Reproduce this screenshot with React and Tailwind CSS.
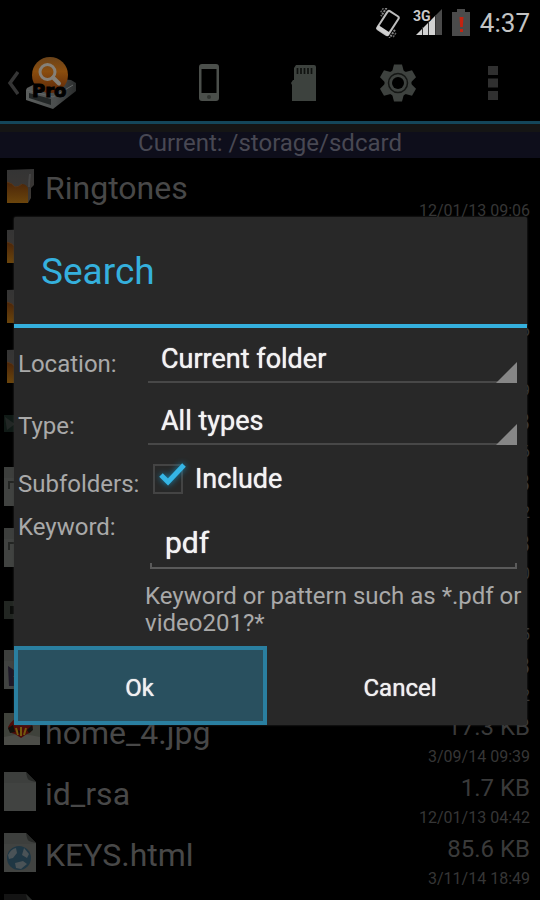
import React, { useState } from 'react';

const FILES = [
  { name: 'Ringtones', icon: 'folder', date: '12/01/13 09:06' },
  { icon: 'folder' },
  { icon: 'folder', date: '6' },
  { icon: 'folder', date: '9' },
  { icon: 'video', size: 'B', date: '6' },
  { icon: 'doc', size: 'B', date: '2' },
  { icon: 'doc', size: 'B', date: '0' },
  { icon: 'apk', date: '5' },
  { icon: 'picture', size: 'B', date: '2' },
  { name: 'home_4.jpg', icon: 'photo', size: '17.3 KB', date: '3/09/14 09:39' },
  { name: 'id_rsa', icon: 'page', size: '1.7 KB', date: '12/01/13 04:42' },
  { name: 'KEYS.html', icon: 'html', size: '85.6 KB', date: '3/11/14 18:49' },
  { icon: 'blank' }
];

function StatusBar() {
  return (
    <div className="flex h-[45px] shrink-0 items-center justify-end pr-[10px]">
      {/* Vibrate */}
      <svg width="26" height="30" viewBox="0 0 26 30" className="mr-3" fill="none">
        <g transform="rotate(33 13 15)">
          <rect x="6.5" y="4" width="13" height="22" rx="2" stroke="#bdbdbd" strokeWidth="2" />
          <path d="M6 24h14" stroke="#d0d0d0" strokeWidth="4" />
          <path d="M3.5 3v10M22.5 17v10" stroke="#858585" strokeWidth="2" strokeDasharray="2 1" />
          <path d="M1 5v6M25 19v6" stroke="#666" strokeWidth="1.5" strokeDasharray="2 1" />
        </g>
      </svg>
      {/* Signal */}
      <svg width="30" height="29" viewBox="0 0 30 29" className="mr-[9px]">
        <path d="M29 1v26h-6V7z" fill="#4a4a4a" />
        <path d="M22 8v19H3z" fill="#d2d2d2" />
        <path d="M9.5 19v8M15.5 13v14M22.5 7v20" stroke="#333" strokeWidth="1" />
        <text x="0" y="13" fontSize="14" fontWeight="700" fill="#c9c9c9" stroke="#000" strokeWidth="2" paintOrder="stroke" fontFamily="Roboto, sans-serif">3G</text>
      </svg>
      {/* Battery */}
      <svg width="18" height="27" viewBox="0 0 18 27" className="mr-[10px]">
        <path d="M0 3h5V0h8v3h5v24H0z" fill="#4b4b4b" />
        <path d="M7.500 8h4l-.7 10H8.200zM8 20h3v3H8z" fill="#c42310" />
      </svg>
      <span className="text-[26px] leading-8 text-[#c4c4c4]">4:37</span>
    </div>
  );
}

function AppLogo() {
  return (
    <svg width="52" height="54" viewBox="0 0 52 54">
      <defs>
        <linearGradient id="orb" x1="0" y1="0" x2="0" y2="1">
          <stop offset="0" stopColor="#6a431a" />
          <stop offset=".4" stopColor="#8a4d0e" />
          <stop offset="1" stopColor="#5c2608" />
        </linearGradient>
        <linearGradient id="drive" x1="0" y1="0" x2="1" y2="0">
          <stop offset="0" stopColor="#5b5e5d" />
          <stop offset=".6" stopColor="#4a4d4d" />
          <stop offset="1" stopColor="#2a2c2c" />
        </linearGradient>
      </defs>
      <path d="M2 32l20-10 24 2 5 3v8L28 53 1 44V34z" fill="url(#drive)" />
      <path d="M4 37l22 6v6L4 42z" fill="#222626" />
      <path d="M2 34l26 7 20-12" stroke="#626565" fill="none" />
      <circle cx="25" cy="19" r="18" fill="url(#orb)" />
      <circle cx="22.500" cy="16" r="7.500" fill="none" stroke="#858078" strokeWidth="3" />
      <path d="M28 21.500l6 6" stroke="#858078" strokeWidth="4" strokeLinecap="round" />
      <text x="7" y="41" fontSize="18" fontWeight="700" fill="#000" stroke="#000" fontFamily="DejaVu Sans, sans-serif">Pro</text>
    </svg>
  );
}

function ActionBar() {
  return (
    <header className="flex h-[79px] shrink-0 items-stretch border-b-[3px] border-[#14465a]">
      <button type="button" aria-label="Back" className="flex w-[162px] items-center gap-[6px] pl-[7px]">
        <svg width="12" height="24" viewBox="0 0 12 24" fill="none" stroke="#353535" strokeWidth="3.500">
          <path d="M11 1L3 12l8 11" />
        </svg>
        <AppLogo />
      </button>
      <button type="button" aria-label="Phone storage" className="flex flex-1 items-center justify-center">
        <svg width="22" height="38" viewBox="0 0 22 38">
          <path fillRule="evenodd" d="M4 0h14q3 0 3 3v31q0 3-3 3H4q-3 0-3-3V3q0-3 3-3zM3.500 5v24h15V5z" fill="#4b4f4b" />
          <circle cx="11" cy="33" r="2" fill="#303330" />
        </svg>
      </button>
      <button type="button" aria-label="SD card" className="flex flex-1 items-center justify-center">
        <svg width="26" height="36" viewBox="0 0 26 36">
          <path d="M5 0h18q2 0 2 2v34H1V20l-1-2 2-3h1V3z" fill="#3d423e" />
          <path d="M6.500 3v6M10 3v6M13.500 3v6M17 3v6M20.500 3v6" stroke="#101210" strokeWidth="1.700" />
        </svg>
      </button>
      <button type="button" aria-label="Settings" className="flex flex-1 items-center justify-center">
        <svg width="38" height="38" viewBox="-19 -19 38 38">
          <g fill="#3e423f">
            <circle r="13.500" />
            {[0, 60, 120, 180, 240, 300].map(angle => (
              <path key={angle} d="M-6-11l2-7.500h8l2 7.500z" transform={`rotate(${angle})`} />
            ))}
          </g>
          <circle r="9.500" fill="none" stroke="#141614" strokeWidth="1.500" />
          <circle r="6" fill="#000" />
        </svg>
      </button>
      <button type="button" aria-label="More options" className="flex flex-1 items-center justify-center">
        <svg width="10" height="34" viewBox="0 0 10 34" fill="#303030">
          <path d="M0 0h10v9H0zM0 12.500h10v9H0zM0 25h10v9H0z" />
        </svg>
      </button>
    </header>
  );
}

function FileIcon({ type }) {
  if (type === 'folder') {
    return (
      <svg width="32" height="40" viewBox="0 0 32 40">
        <defs>
          <linearGradient id="folder" x1="0" y1="0" x2="0" y2="1">
            <stop offset="0" stopColor="#4a2509" />
            <stop offset="1" stopColor="#6b450c" />
          </linearGradient>
          <linearGradient id="paper" x1="0" y1="0" x2="0" y2="1">
            <stop offset="0" stopColor="#343434" />
            <stop offset="1" stopColor="#3d3834" />
          </linearGradient>
        </defs>
        <path d="M3 5l27-1v16l-3 3v10l-3 5H3z" fill="url(#paper)" />
        <path d="M3 17q5 1 8 5 4 0 7-3 4 0 6 4v15H3z" fill="url(#folder)" />
        <path d="M3 17q5 1 8 5 4 0 7-3" fill="none" stroke="#573417" />
        <path d="M26 9q-1 8-1 13" fill="none" stroke="#464646" strokeWidth="2" />
      </svg>
    );
  }
  if (type === 'video') {
    return (
      <svg width="32" height="40" viewBox="0 0 32 40">
        <path d="M0 10h30v17H0z" fill="#101a16" />
        <path d="M1 12l10 7-8 6" fill="#222725" />
      </svg>
    );
  }
  if (type === 'apk') {
    return (
      <svg width="32" height="40" viewBox="0 0 32 40">
        <path d="M0 13h32v18H0z" fill="#222622" />
        <path d="M6 18h12v8H6z" fill="#0b0d0b" />
      </svg>
    );
  }
  if (type === 'photo') {
    return (
      <svg width="36" height="40" viewBox="0 0 36 40">
        <path d="M0 3h36v32H0z" fill="#3f423b" />
        <path d="M0 27q18-5 36 0v8H0z" fill="#4c4d48" />
        <path d="M4 17q5-10 13-9 9-2 12 9-1 6-6 7l-6 4-6-4q-6-1-7-7z" fill="#4d0b08" />
        <path d="M12 18l2 7M17 17v9M22 18l-2 7" stroke="#74580d" strokeWidth="2" fill="none" />
        <path d="M4 18l5-3 2 7-5 1zM23 20l5-5 1 5-4 3zM14 20l2 1-1 4z" fill="#10100c" />
      </svg>
    );
  }
  return (
    <svg width="32" height="40" viewBox="0 0 32 40">
      <path d="M0 1h22l10 10v29H0z" fill={type === 'blank' ? '#141414' : '#3d3f3d'} />
      {type !== 'blank' && <path d="M0 12h32v28H0z" fill="#414341" />}
      <path d="M22 1q1 7 3 8t7 2z" fill="#272927" />
      {type === 'html' && (
        <g>
          <circle cx="15" cy="26" r="12" fill="#1f3744" />
          <path d="M4 23q3-6 8-7l1 5-4 5-4 1zM20 16l5 6-2 4-5-3zM11 31l8-2 4 3-6 5-5-1z" fill="#4a5357" />
        </g>
      )}
      {type === 'doc' && <path d="M4 15h14v2H6v6H4z" fill="#232523" />}
      {type === 'picture' && <path d="M4 17l9 6-4 5h9l-5 9H5z" fill="#1d1827" />}
    </svg>
  );
}

function FileRow({ file }) {
  const isFolder = file.icon === 'folder';
  return (
    <li className={`flex shrink-0 justify-between pr-[10px] pl-1 ${isFolder ? 'h-[60px]' : 'h-[61px]'}`}>
      <div className="flex h-[50px] items-center">
        <span className="mb-[6px] flex w-[41px] shrink-0">
          <FileIcon type={file.icon} />
        </span>
        <span className="text-[32px] leading-[50px] text-[#484848]">{file.name}</span>
      </div>
      <div className="flex flex-col gap-[2px] pt-[3px] text-right">
        <span className="h-8 text-2xl leading-8 text-[#3a3a3a]">{file.size}</span>
        <span className="text-base leading-6 text-[#363636]">{file.date}</span>
      </div>
    </li>
  );
}

function Spinner({ id, value, onChange, options }) {
  return (
    <div className="relative mt-2 mr-[6px] mb-[7px] ml-[3px]">
      <select
        id={id}
        value={value}
        onChange={e => onChange(e.target.value)}
        className="block h-[47px] w-full appearance-none rounded-none border-b-2 border-[#484848] bg-transparent pl-[13px] text-[27px] leading-8 text-[#f3f3f3] outline-none text-shadow-[0_0_1px_#ffffff]"
      >
        {options.map(option => (
          <option key={option}>{option}</option>
        ))}
      </select>
      <svg width="21" height="21" viewBox="0 0 21 21" className="pointer-events-none absolute right-0 bottom-0">
        <path d="M21 0v21H0z" fill="#868686" />
      </svg>
    </div>
  );
}

function SearchDialog() {
  const [location, setLocation] = useState('Current folder');
  const [type, setType] = useState('All types');
  const [include, setInclude] = useState(true);
  const [keyword, setKeyword] = useState('pdf');

  return (
    <form
      role="dialog"
      aria-labelledby="search-title"
      onSubmit={e => e.preventDefault()}
      className="w-full rounded-[2px] bg-[#282828] shadow-[0_0_2px_#3a3a3a]"
    >
      <h2 id="search-title" className="border-b-4 border-[#35b0dd] pt-[2px] pl-[27px] text-[37px] leading-[105px] text-[#35b0dd]">
        Search
      </h2>

      <div className="grid grid-cols-[127px_1fr] px-1 pb-[9px] text-2xl text-[#a9a9a9]">
        <label htmlFor="location" className="self-center pt-[10px]">Location:</label>
        <Spinner id="location" value={location} onChange={setLocation} options={['Current folder', 'All folders']} />

        <label htmlFor="type" className="self-center pt-[10px]">Type:</label>
        <Spinner id="type" value={type} onChange={setType} options={['All types', 'Files', 'Folders']} />

        <span className="self-center pt-[10px]">Subfolders:</span>
        <label className="flex h-[54px] items-center pl-2 text-[27px] leading-8 text-[#f3f3f3] text-shadow-[0_0_1px_#ffffff]">
          <span className="relative mr-3 flex">
            <input
              type="checkbox"
              checked={include}
              onChange={e => setInclude(e.target.checked)}
              className="size-[30px] appearance-none border-2 border-[#444444]"
            />
            {include && (
              <svg width="30" height="26" viewBox="0 0 30 26" className="pointer-events-none absolute -top-[2px] left-[4px] drop-shadow-[0_0_3px_#1886b0]">
                <path d="M4 13l7 7L27 3" fill="none" stroke="#35b5e5" strokeWidth="5" />
              </svg>
            )}
          </span>
          Include
        </label>

        <label htmlFor="keyword" className="pt-[5px]">Keyword:</label>
        <div>
          <div className="mt-[11px] mr-[6px] ml-[5px]">
            <input
              id="keyword"
              type="text"
              value={keyword}
              onChange={e => setKeyword(e.target.value)}
              className="block h-[46px] w-full bg-transparent pt-[4px] pl-[15px] text-[30px] leading-9 text-[#f3f3f3] outline-none text-shadow-[0_0_1px_#ffffff]"
            />
            <div className="h-[6px] border-x-2 border-b-2 border-[#5a5a5a]" />
          </div>
          <p className="mt-[14px] leading-[27px]">Keyword or pattern such as *.pdf or video201?*</p>
        </div>
      </div>

      <div className="flex h-[79px] text-2xl text-[#f0f0f0]">
        <button type="submit" className="w-[253px] border-4 border-[#2a7fa0] bg-[#29505f] pt-[4px] pr-[2px] text-shadow-[0_0_1px_#ffffff]">
          Ok
        </button>
        <button type="button" className="flex-1 pt-[4px] pl-[6px] text-shadow-[0_0_1px_#ffffff]">Cancel</button>
      </div>
    </form>
  );
}

export default function App() {
  return (
    <div className="relative flex h-screen flex-col overflow-hidden bg-black font-[Roboto,sans-serif]">
      <StatusBar />
      <ActionBar />
      <div className="mb-[5px] shrink-0 border-t-8 border-[#151515] bg-[#0e0e1b] pb-[4px] text-center text-2xl leading-[22px] text-[#484853]">
        Current: /storage/sdcard
      </div>
      <ul className="flex flex-col">
        {FILES.map((file, i) => (
          <FileRow key={i} file={file} />
        ))}
      </ul>

      {/* Modal over the file list */}
      <div className="absolute inset-0 flex items-center justify-center pt-[42px] pr-[13px] pl-[14px]">
        <SearchDialog />
      </div>
    </div>
  );
}
